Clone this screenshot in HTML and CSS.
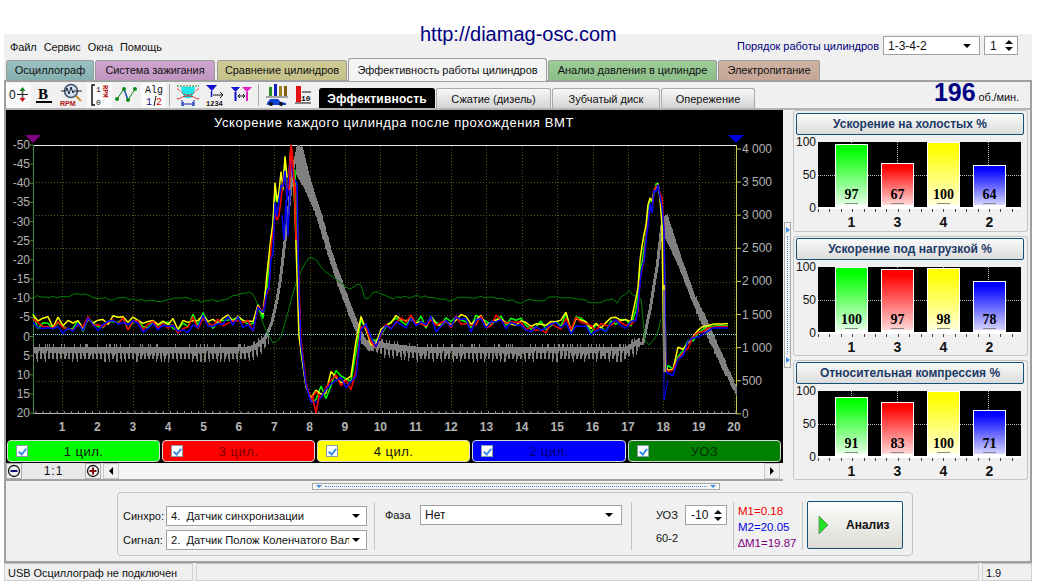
FILE: index.html
```html
<!DOCTYPE html>
<html lang="en">
<head>
<meta charset="UTF-8" />
<title>Diamag</title>
<link rel="stylesheet" href="styles.css">
</head>
<body>

<div class="url">http://diamag-osc.com</div>

<div class="app">

  <div class="menubar">
    <div class="menu"><span>Файл</span><span>Сервис</span><span>Окна</span><span>Помощь</span></div>
    <div class="order">
      <span class="order-label">Порядок работы цилиндров</span>
      <div class="combo order-combo"><span>1-3-4-2</span><i class="arrow"></i></div>
      <div class="spin order-spin"><span>1</span><div class="spin-btns"><i class="up"></i><i class="down"></i></div></div>
    </div>
  </div>

  <div class="tabs">
    <div class="tab t1">Осциллограф</div>
    <div class="tab t2">Система зажигания</div>
    <div class="tab t3">Сравнение цилиндров</div>
    <div class="tab active">Эффективность работы цилиндров</div>
    <div class="tab t5">Анализ давления в цилиндре</div>
    <div class="tab t6">Электропитание</div>
  </div>

  <div class="main">

    <div class="toolrow">
      <div class="tools">
        <div class="tool on w25">
          <svg width="22" height="22" viewBox="0 0 22 22"><text x="1" y="15" class="ic-t">0</text><path d="M9 10.500h11" stroke="#222" stroke-width="1"/><path d="M14.500 3l-3 4h6z" fill="#0a8a1a"/><path d="M14.500 18l-3-4h6z" fill="#d01010"/><path d="M13.800 7h1.500v3h-1.500zM13.800 11h1.500v3h-1.500z" fill="#555"/></svg>
        </div>
        <div class="tool w27">
          <svg width="22" height="22" viewBox="0 0 22 22"><text x="4" y="15" class="ic-b">B</text><path d="M2 18h16" stroke="#000" stroke-width="2"/></svg>
        </div>
        <div class="tool w28">
          <svg width="26" height="24" viewBox="0 0 26 24"><circle cx="12" cy="8" r="6.500" fill="#cfe0ee" stroke="#44546a" stroke-width="1.500"/><path d="M2 8h5l1-3 2 6 2-7 2 6 1-2h8" fill="none" stroke="#223" stroke-width="1"/><path d="M17 13l5 5" stroke="#c89028" stroke-width="2"/><text x="1" y="23" class="ic-rpm">RPM</text></svg>
        </div>
        <div class="tool-gap"></div>
        <div class="tool on w25">
          <svg width="22" height="24" viewBox="0 0 22 24"><path d="M6 2H3v20h3" fill="none" stroke="#111" stroke-width="1.500"/><text x="7" y="9" class="ic-s">1</text><text x="7" y="22" class="ic-s">0</text><text x="0" y="0" class="ic-rpmv" transform="translate(14 2) rotate(90)">RPM</text></svg>
        </div>
        <div class="tool w28">
          <svg width="24" height="20" viewBox="0 0 24 20"><path d="M3 14L10 4l4 11L21 4" fill="none" stroke="#0a8a1a" stroke-width="1"/><path d="M10 4l4 11" stroke="#2050c0" stroke-width="1.500"/><circle cx="3" cy="14" r="2" fill="#0a8a1a"/><circle cx="10" cy="4" r="2" fill="#0a8a1a"/><circle cx="14" cy="15" r="2" fill="#0a8a1a"/><circle cx="21" cy="4" r="2" fill="#0a8a1a"/></svg>
        </div>
        <div class="tool-gap"></div>
        <div class="tool on w25">
          <svg width="20" height="24" viewBox="0 0 20 24"><text x="1" y="10" class="ic-alg">Alg</text><text x="2" y="22" class="ic-alg nv">1</text><path d="M10 23l2-10" stroke="#111"/><text x="12" y="22" class="ic-alg rd">2</text></svg>
        </div>
        <div class="sep"></div>
        <div class="tool w30">
          <svg width="24" height="24" viewBox="0 0 24 24"><path d="M5 4h14l-1 6-3 5H9L6 10z" fill="#20e8e8"/><path d="M1 6c4 0 4 6 11 6s7-6 11-6" fill="none" stroke="#e02020" stroke-dasharray="2 1"/><path d="M1 3h22" stroke="#0a8a1a" stroke-dasharray="2 1"/><path d="M1 16c4 0 4-3 11-3s7 3 11 3" fill="none" stroke="#d02020"/><path d="M6 21h12M6 21l2-2M6 21l2 2M18 21l-2-2M18 21l-2 2M6 17v6M18 17v6" stroke="#1020c0" fill="none"/></svg>
        </div>
        <div class="tool w24">
          <svg width="22" height="24" viewBox="0 0 22 24"><path d="M2 2h11l-5 6z" fill="#1010d0"/><path d="M7.500 8v6" stroke="#1010d0" stroke-width="1.500"/><path d="M9 12h10M16 9l3 3-3 3" fill="none" stroke="#111"/><text x="2" y="23" class="ic-num">1234</text></svg>
        </div>
        <div class="tool w28">
          <svg width="24" height="22" viewBox="0 0 24 22"><path d="M2 3h9l-4.500 5z" fill="#1010d0"/><path d="M6.500 8v9" stroke="#1010d0" stroke-width="2"/><path d="M13 3h10l-5 5z" fill="#e020c0"/><path d="M18 8v9" stroke="#e020c0" stroke-width="2"/><path d="M9 12h7M9 12l2-2M9 12l2 2M16 12l-2-2M16 12l-2 2" stroke="#111" fill="none"/></svg>
        </div>
        <div class="sep"></div>
        <div class="tool w29">
          <svg width="24" height="24" viewBox="0 0 24 24"><path d="M4 4h3v9H4z" fill="#2a8a2a"/><path d="M9 1h3v12H9z" fill="#1020c0"/><path d="M14 3h3v10h-3z" fill="#a08020"/><path d="M19 3h3v10h-3z" fill="#806010"/><path d="M1 14h22" stroke="#555"/><path d="M2 20l3-4h8l3 3 5 1v2H2z" fill="#1040d0"/><circle cx="6" cy="21" r="2" fill="#111"/><circle cx="16" cy="21" r="2" fill="#111"/></svg>
        </div>
        <div class="tool w24">
          <svg width="18" height="22" viewBox="0 0 18 22"><path d="M2 2h5v16H2z" fill="#e01010"/><text x="7" y="17" class="ic-ten">10</text><path d="M1 19h16M8 8h9" stroke="#111"/></svg>
        </div>
      </div>
      <div class="subtabs">
        <div class="subtab dark">Эффективность</div>
        <div class="subtab w115">Сжатие (дизель)</div>
        <div class="subtab w108">Зубчатый диск</div>
        <div class="subtab w94">Опережение</div>
      </div>
      <div class="rpm"><b>196</b> об./мин.</div>
    </div>

    <div class="workspace">
      <div class="scope">
        <svg id="chart" class="chart" width="777" height="330" viewBox="6 110 777 330"></svg>
        <div class="legend">
          <div class="leg green"><i class="check"></i>1 цил.</div>
          <div class="leg red"><i class="check"></i>3 цил.</div>
          <div class="leg yellow"><i class="check"></i>4 цил.</div>
          <div class="leg blue"><i class="check"></i>2 цил.</div>
          <div class="leg dgreen"><i class="check"></i>УОЗ</div>
        </div>
        <div class="scrollrow">
          <div class="zoom-btn"><svg width="14" height="14" viewBox="0 0 14 14"><circle cx="7" cy="7" r="5.500" fill="#f4f4f4" stroke="#111" stroke-width="1.300"/><path d="M3.500 7h7" stroke="#101070" stroke-width="2"/></svg></div>
          <div class="zoom-val">1:1</div>
          <div class="zoom-btn"><svg width="14" height="14" viewBox="0 0 14 14"><circle cx="7" cy="7" r="5.500" fill="#f4f4f4" stroke="#111" stroke-width="1.300"/><path d="M3.500 7h7M7 3.500v7" stroke="#801010" stroke-width="2"/></svg></div>
          <div class="scrollbar">
            <div class="sb-btn"><i class="tri-left"></i></div>
            <div class="sb-track"></div>
            <div class="sb-btn"><i class="tri-right"></i></div>
          </div>
        </div>
      </div>

      <div class="vsplit"><i class="tri-r-blue"></i><span class="vdots"></span><i class="tri-r-blue"></i></div>

      <div class="side">
        <div class="panel first">
          <div class="panel-title">Ускорение на холостых %</div>
          <div class="barchart">
            <div class="yaxis"><span>100</span><span>50</span><span>0</span></div>
            <div class="plot-wrap">
              <div class="plot">
                <i class="gh"></i><i class="gv g1"></i><i class="gv g2"></i><i class="gv g3"></i><i class="gv g4"></i>
                <div class="bar b-green" style="height:97%"><span>97</span></div>
                <div class="bar b-red" style="height:67%"><span>67</span></div>
                <div class="bar b-yellow" style="height:100%"><span>100</span></div>
                <div class="bar b-blue" style="height:64%"><span>64</span></div>
              </div>
              <div class="ticks"></div>
              <div class="xlabels"><span>1</span><span>3</span><span>4</span><span>2</span></div>
            </div>
          </div>
        </div>
        <div class="panel">
          <div class="panel-title">Ускорение под нагрузкой %</div>
          <div class="barchart">
            <div class="yaxis"><span>100</span><span>50</span><span>0</span></div>
            <div class="plot-wrap">
              <div class="plot">
                <i class="gh"></i><i class="gv g1"></i><i class="gv g2"></i><i class="gv g3"></i><i class="gv g4"></i>
                <div class="bar b-green" style="height:100%"><span>100</span></div>
                <div class="bar b-red" style="height:97%"><span>97</span></div>
                <div class="bar b-yellow" style="height:98%"><span>98</span></div>
                <div class="bar b-blue" style="height:78%"><span>78</span></div>
              </div>
              <div class="ticks"></div>
              <div class="xlabels"><span>1</span><span>3</span><span>4</span><span>2</span></div>
            </div>
          </div>
        </div>
        <div class="panel">
          <div class="panel-title">Относительная компрессия %</div>
          <div class="barchart">
            <div class="yaxis"><span>100</span><span>50</span><span>0</span></div>
            <div class="plot-wrap">
              <div class="plot">
                <i class="gh"></i><i class="gv g1"></i><i class="gv g2"></i><i class="gv g3"></i><i class="gv g4"></i>
                <div class="bar b-green" style="height:91%"><span>91</span></div>
                <div class="bar b-red" style="height:83%"><span>83</span></div>
                <div class="bar b-yellow" style="height:100%"><span>100</span></div>
                <div class="bar b-blue" style="height:71%"><span>71</span></div>
              </div>
              <div class="ticks"></div>
              <div class="xlabels"><span>1</span><span>3</span><span>4</span><span>2</span></div>
            </div>
          </div>
        </div>
      </div>
    </div>

    <div class="lower">
      <div class="hsplit"><i class="tri-d-blue"></i><span class="hdots"></span><i class="tri-d-blue"></i></div>
      <div class="group">
        <div class="col-signals">
          <div class="row"><label>Синхро:</label><div class="combo w201"><span>4.&nbsp; Датчик синхронизации</span><i class="arrow"></i></div></div>
          <div class="row"><label>Сигнал:</label><div class="combo w201"><span>2.&nbsp; Датчик Полож Коленчатого Вал</span><i class="arrow"></i></div></div>
        </div>
        <div class="vline"></div>
        <div class="col-phase">
          <label>Фаза</label>
          <div class="combo w202"><span>Нет</span><i class="arrow"></i></div>
        </div>
        <div class="vline"></div>
        <div class="col-uoz">
          <div class="row uoz-row"><label>УОЗ</label><div class="spin uoz-spin"><span>-10</span><div class="spin-btns"><i class="up"></i><i class="down"></i></div></div></div>
          <div class="teeth">60-2</div>
        </div>
        <div class="vline"></div>
        <div class="col-m">
          <div class="m-red">M1=0.18</div>
          <div class="m-blue">M2=20.05</div>
          <div class="m-purple">∆M1=19.87</div>
        </div>
        <div class="vline"></div>
        <div class="run"><svg width="11" height="20" viewBox="0 0 11 20"><path d="M1 1l9 9-9 9z" fill="#22e022" stroke="#6a9a6a"/></svg><b>Анализ</b></div>
      </div>
    </div>
  </div>

  <div class="status">
    <div class="cell c1">USB Осциллограф не подключен</div>
    <div class="cell c2"></div>
    <div class="cell c3">1.9</div>
  </div>
</div>

<script src="script.js"></script>
</body>
</html>
```

FILE: styles.css
```css
body {
  margin: 0;
  background: white;
  font-family: "Liberation Sans", Arial, sans-serif;
  font-size: 11px;
  color: #111;
  overflow: hidden;
}

.url {
  position: absolute;
  left: 420px;
  top: 23px;
  font-size: 20px;
  color: #000080;
  z-index: 2;
}

.app {
  margin: 34px 0 0 4px;
  width: 1028px;
  height: 547px;
  background: #f0f0f0;
  display: flex;
  flex-direction: column;
}

/* top menu */
.menubar {
  height: 26px;
  display: flex;
  justify-content: space-between;
  align-items: center;
  flex: none;
}
.menu { display: flex; gap: 7px; padding: 0 0 0 6px; letter-spacing: -0.1px; }
.order { display: flex; align-items: center; gap: 4px; padding-right: 14px; margin-top: -3px; }
.order-label { color: #000080; margin-left: 2px; letter-spacing: -0.02px; }

.combo {
  height: 20px;
  background: white;
  border: 1px solid #a0a0a0;
  box-sizing: border-box;
  display: flex;
  align-items: center;
  justify-content: space-between;
  padding: 0 8px 0 4px;
  font-size: 12px;
  white-space: nowrap;
  overflow: hidden;
}
.combo span { overflow: hidden; }
.arrow {
  flex: none;
  border-left: 4px solid transparent;
  border-right: 4px solid transparent;
  border-top: 4px solid #000;
  margin-left: 3px;
}
.order-combo { width: 97px; height: 19px; }

.spin {
  height: 20px;
  background: white;
  border: 1px solid #a0a0a0;
  box-sizing: border-box;
  display: flex;
  align-items: center;
  justify-content: space-between;
  padding: 0 4px 0 5px;
  font-size: 12px;
}
.order-spin { width: 34px; height: 19px; }
.uoz-spin { width: 42px; }
.spin-btns { display: flex; flex-direction: column; gap: 3px; }
.spin-btns .up { border-left: 4px solid transparent; border-right: 4px solid transparent; border-bottom: 4px solid #111; }
.spin-btns .down { border-left: 4px solid transparent; border-right: 4px solid transparent; border-top: 4px solid #111; }

/* page tabs */
.tabs {
  height: 20px;
  display: flex;
  padding-left: 2px;
  flex: none;
  position: relative;
  z-index: 1;
}
.tab {
  height: 20px;
  box-sizing: border-box;
  border: 1px solid #9a9a9a;
  border-bottom: none;
  border-radius: 3px 3px 0 0;
  margin-right: 1px;
  display: flex;
  align-items: center;
  justify-content: center;
  white-space: nowrap;
  padding-bottom: 1px;
  letter-spacing: -0.05px;
}
.t1 { width: 88px; background: linear-gradient(#9cc2c2, #85b0b0); }
.t2 { width: 120px; background: linear-gradient(#cfa6cf, #c095c0); }
.t3 { width: 130px; background: linear-gradient(#d0cc96, #c4c088); margin-left: 1px; }
.active { width: 199px; height: 23px; margin-top: -2px; background: #f4f4f4; }
.t5 { width: 169px; background: linear-gradient(#9dcc98, #8cbe88); }
.t6 { width: 102px; background: linear-gradient(#d0b3a4, #c4a596); }

.main {
  height: 483px;
  box-sizing: border-box;
  border: 2px solid #a0a0a0;
  display: flex;
  flex-direction: column;
  flex: none;
}

/* toolbar row */
.toolrow {
  height: 26px;
  display: flex;
  align-items: flex-end;
  flex: none;
  position: relative;
  border-bottom: 2px solid #b4b4b4;
}
.tools { display: flex; align-items: center; height: 26px; width: 313px; flex: none; }
.tool { height: 25px; display: flex; align-items: center; justify-content: center; flex: none; }
.tool.on { background: #fafafa; }
.tool svg { display: block; }
.w24 { width: 24px; }
.w25 { width: 25px; }
.w27 { width: 27px; }
.w28 { width: 28px; }
.w29 { width: 29px; }
.w30 { width: 30px; }
.tool-gap { width: 1px; flex: none; }
.sep { width: 1px; height: 22px; background: #a8a8a8; margin: 0 3px; flex: none; }
.ic-t { font: 12px "Liberation Sans", sans-serif; fill: #111; }
.ic-b { font: bold 15px "Liberation Serif", serif; fill: #000; }
.ic-rpm { font: bold 7px "Liberation Sans", sans-serif; fill: #b01010; }
.ic-s { font: 8px "Liberation Mono", monospace; fill: #111; }
.ic-rpmv { font: bold 7px "Liberation Mono", monospace; fill: #b01010; }
.ic-alg { font: 10px "Liberation Mono", monospace; fill: #111; }
.ic-alg.nv { fill: #101080; }
.ic-alg.rd { fill: #d01010; }
.ic-num { font: bold 7px "Liberation Mono", monospace; fill: #111; }
.ic-ten { font: bold 8px "Liberation Mono", monospace; fill: #111; }

.subtabs { display: flex; gap: 1px; }
.subtab {
  height: 20px;
  box-sizing: border-box;
  border: 1px solid #a8a8a8;
  border-bottom: none;
  border-radius: 3px 3px 0 0;
  background: linear-gradient(#f8f8f8, #d4d4d4);
  display: flex;
  align-items: center;
  justify-content: center;
}
.dark {
  width: 116px;
  background: #000;
  color: white;
  font-weight: bold;
  font-size: 12px;
  letter-spacing: 0.2px;
  border-color: #000;
}
.w115 { width: 115px; }
.w108 { width: 108px; }
.w94 { width: 94px; }
.rpm { margin-left: auto; padding: 0 11px 0 0; color: #111; align-self: flex-end; line-height: 22px; letter-spacing: -0.1px; }
.rpm b { font-size: 25px; color: #000080; }

/* scope + side panels */
.workspace {
  height: 370px;
  display: flex;
  flex: none;
}
.scope {
  width: 777px;
  background: #000;
  flex: none;
  display: flex;
  flex-direction: column;
}
.chart { display: block; flex: none; }
.chart text { font: 12px "Liberation Sans", sans-serif; fill: #b4b4b4; }
.chart text.xnum { font-weight: bold; }
.chart text.ttl { font-size: 13px; fill: white; letter-spacing: 0.6px; }

.legend {
  height: 22px;
  display: flex;
  gap: 2px;
  padding-left: 1px;
  flex: none;
}
.leg {
  flex: 0 0 153px;
  box-sizing: border-box;
  border: 1px solid #d8d8d8;
  border-radius: 4px;
  display: flex;
  align-items: center;
  justify-content: center;
  position: relative;
  font-size: 13px;
  letter-spacing: 0.5px;
}
.green { background: #00ff00; }
.red { background: #ff0000; color: #700; }
.yellow { background: #ffff00; }
.blue { background: #0000ff; color: #00006a; flex-basis: 154px; }
.dgreen { background: #008000; color: #003000; }
.check {
  position: absolute;
  left: 8px;
  top: 4px;
  width: 12px;
  height: 12px;
  box-sizing: border-box;
  background: white;
  border: 1px solid #8a9aaa;
}
.check::after {
  content: "";
  position: absolute;
  left: 3px;
  top: 1px;
  width: 3px;
  height: 6px;
  border: solid #3a90e8;
  border-width: 0 2px 2px 0;
  transform: rotate(40deg);
}

.scrollrow {
  height: 18px;
  margin-top: 1px;
  background: #f0f0f0;
  display: flex;
  align-items: stretch;
  border-bottom: 2px solid #a0a0a0;
  box-sizing: border-box;
  flex: none;
}
.zoom-btn {
  width: 16px;
  display: flex;
  align-items: center;
  justify-content: center;
  border: 1px solid #b0b0b0;
  box-sizing: border-box;
  flex: none;
}
.zoom-val {
  width: 63px;
  flex: none;
  display: flex;
  align-items: center;
  justify-content: center;
  font-size: 12px;
  letter-spacing: 1px;
  background: #e8e8e8;
}
.scrollbar { flex: 1; display: flex; margin-left: 2px; margin-right: 3px; }
.sb-btn {
  width: 16px;
  display: flex;
  align-items: center;
  justify-content: center;
  background: #f0f0f0;
  border: 1px solid #c8c8c8;
  box-sizing: border-box;
}
.sb-track { flex: 1; background: #f4f4f4; }
.tri-left { border-top: 4px solid transparent; border-bottom: 4px solid transparent; border-right: 4px solid #000; }
.tri-right { border-top: 4px solid transparent; border-bottom: 4px solid transparent; border-left: 4px solid #000; }

.vsplit {
  width: 7px;
  height: 146px;
  align-self: center;
  margin: 0 2px 0 1px;
  flex: none;
  box-sizing: border-box;
  border: 1px solid #a8a8a8;
  background: #f4f4f4;
  display: flex;
  flex-direction: column;
  align-items: center;
  justify-content: space-between;
  padding: 4px 0;
}
.vdots { flex: 1; margin: 3px 0; border-left: 1px dotted #3a90e8; }
.tri-r-blue { border-top: 3px solid transparent; border-bottom: 3px solid transparent; border-left: 4px solid #3a90e8; }

.side {
  width: 235px;
  flex: none;
  display: flex;
  flex-direction: column;
  gap: 4px;
}
.panel {
  height: 120px;
  box-sizing: border-box;
  border: 1px solid #c4c4c4;
  border-radius: 3px;
  padding: 1px 2px 0;
}
.panel.first { height: 122px; padding-top: 2px; }
.panel-title {
  height: 22px;
  box-sizing: border-box;
  border: 1px solid #14507a;
  border-radius: 2px;
  background: linear-gradient(#fafafa, #dcdcdc);
  color: #1c3a66;
  font-weight: bold;
  font-size: 12px;
  display: flex;
  align-items: center;
  justify-content: center;
  width: 228px;
}
.barchart { display: flex; margin-top: 7px; }
.yaxis {
  width: 22px;
  height: 78px;
  margin-top: -6px;
  flex: none;
  display: flex;
  flex-direction: column;
  justify-content: space-between;
  align-items: flex-end;
  padding-right: 2px;
  box-sizing: border-box;
  font-size: 12px;
  line-height: 12px;
}
.plot-wrap { width: 203px; flex: none; }
.plot {
  height: 65px;
  background: #000;
  display: flex;
  align-items: flex-end;
  gap: 13px;
  padding-left: 17px;
  position: relative;
  border-bottom: 2px solid #fff;
}
.gh { position: absolute; left: 0; right: 0; top: 50%; border-top: 1px dotted #bbb; }
.gv { position: absolute; top: 0; bottom: 0; border-left: 1px dotted #bbb; }
.g1 { left: 33px; }
.g2 { left: 79px; }
.g3 { left: 125px; }
.g4 { left: 170px; }
.bar {
  width: 33px;
  box-sizing: border-box;
  border: 1px solid #fff;
  border-bottom-width: 2px;
  position: relative;
  display: flex;
  justify-content: center;
  align-items: flex-end;
  font: bold 14px "Liberation Serif", serif;
  color: #000;
}
.bar span { padding-bottom: 2px; position: relative; }
.bar::after {
  content: "";
  position: absolute;
  left: 9px;
  right: 9px;
  bottom: 1px;
  height: 1px;
  background: #8a8a8a;
}
.b-green { background: linear-gradient(#00ff00 8%, #e4ffe4); }
.b-red { background: linear-gradient(#ff0000 8%, #ffd8d8); }
.b-yellow { background: linear-gradient(#ffff00 8%, #ffffd8); }
.b-blue { background: linear-gradient(#0000ff 8%, #d4d4ff); }
.ticks {
  height: 3px;
  background-image: repeating-linear-gradient(90deg, #444 0 1px, transparent 1px 11.4px);
}
.xlabels {
  display: flex;
  gap: 13px;
  padding-left: 17px;
  font-weight: bold;
  font-size: 14px;
  line-height: 16px;
  margin-top: 2px;
}
.xlabels span { width: 33px; text-align: center; }

/* lower controls */
.lower { flex: 1; position: relative; display: flex; flex-direction: column; }
.hsplit {
  width: 408px;
  height: 7px;
  margin: 3px 0 2px 306px;
  box-sizing: border-box;
  border: 1px solid #a8a8a8;
  background: #f4f4f4;
  display: flex;
  align-items: center;
  padding: 0 3px;
  flex: none;
}
.hdots { flex: 1; margin: 0 3px; border-top: 1px dotted #3a90e8; }
.tri-d-blue { border-left: 3px solid transparent; border-right: 3px solid transparent; border-top: 3px solid #3a90e8; }

.group {
  width: 796px;
  height: 64px;
  margin-left: 111px;
  box-sizing: border-box;
  border: 1px solid #c4c4c4;
  border-radius: 4px;
  display: flex;
  padding: 8px 0 3px 5px;
}
.row { display: flex; align-items: center; }
.col-signals { width: 244px; flex: none; display: flex; flex-direction: column; gap: 4px; padding-top: 5px; box-sizing: border-box; }
.col-signals label { width: 43px; flex: none; }
.w201 { width: 201px; font-size: 11.2px; padding-right: 6px; }
.w202 { width: 202px; }
.vline { width: 1px; background: #c4c4c4; flex: none; margin: 1px 0 2px; }
.col-signals + .vline { margin-left: 7px; }
.col-phase { width: 256px; flex: none; display: flex; align-items: flex-start; box-sizing: border-box; padding: 4px 0 0 10px; }
.col-phase label { width: 35px; line-height: 20px; flex: none; }
.col-uoz { width: 101px; flex: none; box-sizing: border-box; padding: 4px 0 0 24px; }
.uoz-row label { width: 29px; flex: none; }
.teeth { margin-top: 7px; }
.col-m { width: 68px; flex: none; box-sizing: border-box; padding: 2px 0 0 4px; font-size: 11.5px; line-height: 16px; white-space: nowrap; }
.m-red { color: #f00000; }
.m-blue { color: #0000e0; }
.m-purple { color: #800080; }
.run {
  width: 96px;
  height: 48px;
  margin: 0 0 0 4px;
  box-sizing: border-box;
  border: 1px solid #14507a;
  border-radius: 2px;
  background: linear-gradient(#fcfcfc, #dcdcd4);
  display: flex;
  align-items: center;
  padding-left: 10px;
  gap: 17px;
  font-size: 12px;
}

/* status bar */
.status { height: 18px; display: flex; gap: 3px; flex: none; }
.cell {
  box-sizing: border-box;
  border: 1px solid #d0d0d0;
  border-top-color: #c0c0c0;
  display: flex;
  align-items: center;
  padding: 1px 0 0 3px;
  white-space: nowrap;
  letter-spacing: -0.05px;
}
.c1 { width: 189px; }
.c2 { flex: 1; }
.c3 { width: 50px; }
```

FILE: script.js
```js
// scope picture: coordinates below are screen pixels, the svg viewBox starts at 6,110
const NS = "http://www.w3.org/2000/svg";
const chart = document.getElementById("chart");

function add(tag, attrs, text) {
  const el = document.createElementNS(NS, tag);
  for (const k in attrs) el.setAttribute(k, attrs[k]);
  if (text !== undefined) el.textContent = text;
  chart.appendChild(el);
  return el;
}

let seed = 12345;
function rnd() {
  seed = (seed * 1664525 + 1013904223) % 4294967296;
  return seed / 4294967296;
}

function interp(pts, x) {
  if (x <= pts[0][0]) return pts[0][1];
  for (let i = 1; i < pts.length; i++) {
    if (x <= pts[i][0]) {
      const t = (x - pts[i - 1][0]) / (pts[i][0] - pts[i - 1][0]);
      return pts[i - 1][1] + t * (pts[i][1] - pts[i - 1][1]);
    }
  }
  return pts[pts.length - 1][1];
}

const xOf = n => 62 + (n - 1) * 35.37;

// grid
const grid = { stroke: "#555518", "stroke-width": 1, "stroke-dasharray": "1 2" };
for (let n = 1; n <= 20; n++) add("line", { x1: Math.round(xOf(n)) + .5, x2: Math.round(xOf(n)) + .5, y1: 146, y2: 413, ...grid });
[182, 215, 248, 282, 315, 348, 381].forEach(y => add("line", { x1: 33, x2: 736, y1: y + .5, y2: y + .5, ...grid }));

// title
add("text", { x: 394, y: 127, class: "ttl", "text-anchor": "middle" }, "Ускорение каждого цилиндра после прохождения ВМТ");

// axes
add("line", { x1: 33, x2: 736, y1: 145.5, y2: 145.5, stroke: "#e8e8e8" });
add("line", { x1: 33, x2: 736, y1: 413.5, y2: 413.5, stroke: "#bbb" });
add("line", { x1: 33.5, x2: 33.5, y1: 145, y2: 414, stroke: "#3a8a3a" });
add("line", { x1: 736.5, x2: 736.5, y1: 145, y2: 414, stroke: "#c8c850" });
for (let x = 36; x < 736; x += 7.07) add("line", { x1: x, x2: x, y1: 411, y2: 414, stroke: "#999" });

for (let i = 0; i < 15; i++) {
  const v = -50 + i * 5;
  const y = 145 + i * 19.15;
  add("text", { x: 30, y: y + 4, "text-anchor": "end" }, String(v < 0 ? v : Math.abs(v)));
  add("line", { x1: 30, x2: 33, y1: y, y2: y, stroke: "#3a8a3a" });
}
["4 000", "3 500", "3 000", "2 500", "2 000", "1 500", "1 000", "500", "0"].forEach((t, i) => {
  const y = 149 + i * 33.1;
  add("text", { x: 742, y: y + 4 }, t);
  add("line", { x1: 736, x2: 741, y1: y, y2: y, stroke: "#c8c850" });
});
for (let n = 1; n <= 20; n++) add("text", { x: xOf(n), y: 431, class: "xnum", "text-anchor": "middle" }, String(n));

// position markers
add("path", { d: "M25 135h16l-8 8z", fill: "#800080" });
add("path", { d: "M728 135h16l-8 8z", fill: "#0000e0" });

// grey rpm band, one short vertical stroke per pixel column
let comb = "";
function column(x, top, bot) {
  comb += `M${x}.5 ${Math.round(top)}V${Math.round(bot)}`;
}
for (let x = 33; x < 640; x++) {
  if (x > 268 && x < 372) continue;
  const lift = interp([[245, 0], [255, -3], [265, -12], [268, -18], [372, -8], [385, -4], [420, 0], [625, 0], [640, -10]], x);
  const top = 347 + lift + (rnd() < .2 ? -3 : 0);
  const bot = (x % 4 < 2 ? 360 : 354) + lift + (rnd() < .3 ? 2 : -1);
  if (x % 4 === 3 && rnd() < .5) column(x, top, top + 7);
  else column(x, top, bot);
}
// first fall after the peak
const fall1Top = [[296, 145], [302, 145], [310, 178], [322, 215], [332, 252], [343, 283], [350, 302], [357, 320], [365, 338], [375, 342]];
const fall1Bot = [[296, 176], [305, 192], [315, 215], [326, 252], [336, 283], [343, 302], [350, 320], [358, 340], [368, 352], [375, 350]];
for (let x = 296; x <= 374; x++) column(x, interp(fall1Top, x) + rnd() * 2, interp(fall1Bot, x) - rnd() * 2);
// second fall, thin at the top and toothed lower down
const fall2Top = [[662, 216], [667, 215], [680, 255], [695, 297], [710, 328], [722, 356], [736, 388]];
const fall2Bot = [[662, 232], [678, 266], [692, 302], [706, 334], [720, 364], [737, 396]];
for (let x = 662; x <= 736; x++) {
  const j = x > 695 ? rnd() * 6 : rnd() * 2;
  column(x, interp(fall2Top, x) - j / 2, interp(fall2Bot, x) + j / 2);
}
add("path", { d: comb, stroke: "#808080", fill: "none", "shape-rendering": "crispEdges" });

add("polyline", { points: "262,342 268,332 272,322 277,300 280,282 287,225 293,168 299,145", fill: "none", stroke: "#808080", "stroke-width": 3, "shape-rendering": "crispEdges" });
add("polyline", { points: "638,343 643,343 650,310 657,267 663,217", fill: "none", stroke: "#808080", "stroke-width": 3, "shape-rendering": "crispEdges" });

// green uoz line
const uoz = [[33, 297], [45, 296], [60, 298], [80, 294], [110, 300], [130, 298], [150, 302], [180, 297], [200, 301], [225, 300], [245, 292], [255, 295], [263, 325], [273, 343], [280, 340], [290, 305], [295, 285], [299, 275], [308, 258], [315, 258], [323, 270], [340, 282], [350, 290], [360, 282], [366, 302], [375, 290], [390, 298], [420, 296], [450, 300], [480, 296], [520, 302], [560, 297], [600, 303], [610, 298], [617, 302], [628, 291], [637, 297], [643, 300], [645, 340], [646, 345], [650, 345], [657, 335], [662, 315]];
const uozPts = [];
for (let x = 33; x <= 662; x += 4) {
  const flat = x < 255 || (x > 375 && x < 640);
  uozPts.push(x + "," + (interp(uoz, x) + (flat ? (rnd() - .5) * 3 : 0)).toFixed(1));
}
add("polyline", { points: uozPts.join(" "), fill: "none", stroke: "#008000", "stroke-width": 1 });

// cursor line
add("line", { x1: 33, x2: 736, y1: 334.5, y2: 334.5, stroke: "#7fe8e8", "stroke-dasharray": "1 1" });

// cylinder traces
const base = [[33, 323], [250, 323], [258, 312], [264, 300], [268, 278], [273, 228], [275, 208], [283, 183], [288, 168], [292, 160], [295, 170], [297, 228], [298, 290], [300, 340], [302, 358], [306, 385], [310, 398], [317, 403], [325, 392], [330, 384], [340, 380], [347, 382], [355, 375], [358, 328], [362, 317], [367, 330], [372, 342], [380, 335], [390, 327], [403, 320], [430, 322], [630, 323], [635, 318], [643, 253], [650, 205], [654, 192], [658, 186], [661, 200], [664, 240], [665, 372], [670, 372], [680, 352], [690, 342], [700, 330], [710, 326], [732, 326]];

function amp(x) {
  if (x < 255) return 4.5;
  if (x < 298) return 12;
  if (x < 355) return 7;
  if (x < 635) return 4.5;
  if (x < 665) return 5;
  if (x < 700) return 4;
  if (x < 712) return 1.5;
  return .3;
}

// samples: wide on the flat parts, tight where the line is steep
const xs = [];
for (let x = 33; x <= 732;) {
  xs.push(x);
  x += (x > 258 && x < 300) || (x > 635 && x < 668) ? 2 : 5;
}
const shared = xs.map(x => (rnd() - .5) * 2 * amp(x) * (x < 712 ? 1.3 : 1));

const traces = [
  { color: "#00ff00", dx: 0, dy: 0 },
  { color: "#ffff00", dx: 1, dy: -2 },
  { color: "#ff0000", dx: -1, dy: 1 },
  { color: "#0000ff", dx: -1, dy: 2 }
];
traces.forEach(t => {
  const pts = xs.map((x, i) => {
    const y = interp(base, x + t.dx) + t.dy + shared[i] + (rnd() - .5) * 2 * amp(x);
    return x + "," + y.toFixed(1);
  });
  add("polyline", { points: pts.join(" "), fill: "none", stroke: t.color, "stroke-width": 1.5, "stroke-linejoin": "bevel" });
});

// the spikes that stand out
add("polyline", { points: "289,190 292,148 294,180 296,240", fill: "none", stroke: "#ff0000", "stroke-width": 1.5 });
add("polyline", { points: "282,215 284,240 286,200 288,236 290,190", fill: "none", stroke: "#0000ff", "stroke-width": 1.5 });
add("polyline", { points: "312,395 316,413 319,396", fill: "none", stroke: "#ff0000", "stroke-width": 1.5 });
add("polyline", { points: "664,285 665,372", fill: "none", stroke: "#ffff00", "stroke-width": 1.5 });
add("polyline", { points: "664,290 664,400 668,380", fill: "none", stroke: "#0000ff", "stroke-width": 1 });
```
